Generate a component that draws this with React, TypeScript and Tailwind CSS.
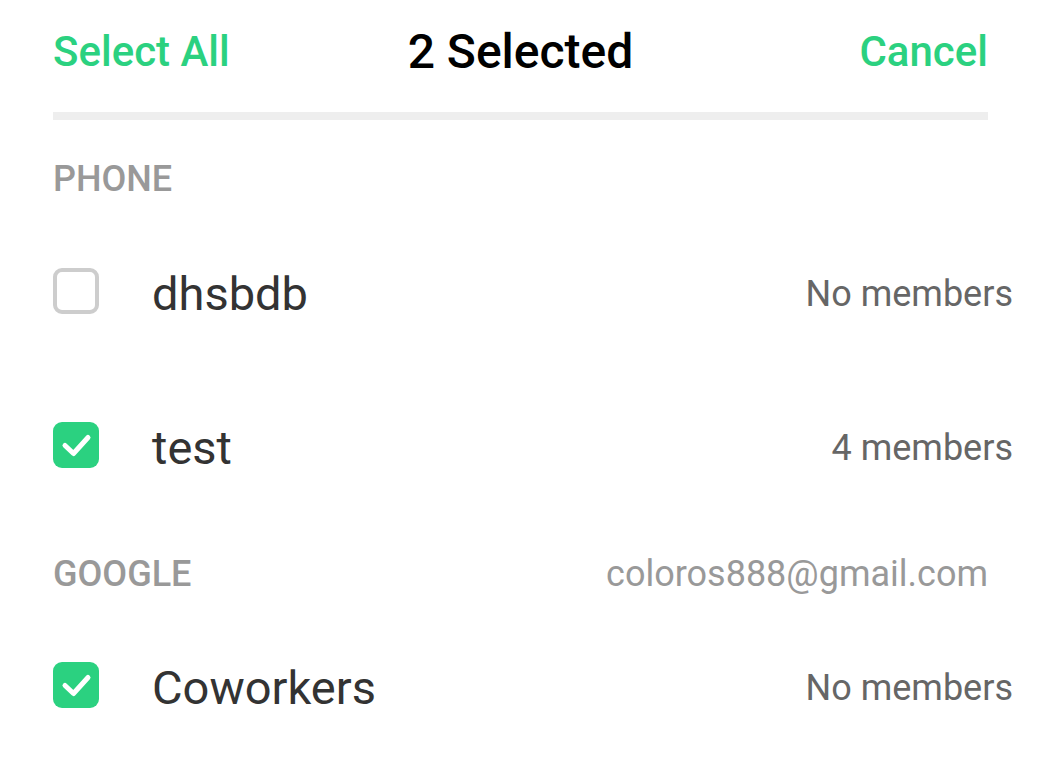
interface Group {
  name: string;
  members: string;
  checked: boolean;
}

const phoneGroups: Group[] = [
  { name: 'dhsbdb', members: 'No members', checked: false },
  { name: 'test', members: '4 members', checked: true },
];

const googleGroups: Group[] = [{ name: 'Coworkers', members: 'No members', checked: true }];

function Checkbox({ checked }: { checked: boolean }) {
  if (!checked) {
    return <div className="w-[46px] h-[46px] rounded-[9px] border-[4px] border-[#cdcdcd] bg-white flex-shrink-0" />;
  }
  return (
    <div className="w-[46px] h-[46px] rounded-[9px] bg-[#2bd180] flex items-center justify-center flex-shrink-0">
      <svg viewBox="0 0 46 46" className="w-[46px] h-[46px]" fill="none">
        <path d="M12 23.5 L20.5 31.5 L35 15.5" stroke="white" strokeWidth="5" strokeLinecap="round" strokeLinejoin="round" />
      </svg>
    </div>
  );
}

function GroupRow({ group }: { group: Group }) {
  return (
    <div className="h-[154px] flex items-center pl-[53px] pr-[35px]">
      <Checkbox checked={group.checked} />
      <span className="ml-[53px] mt-[4px] text-[47px] leading-none text-[#333333]">{group.name}</span>
      <span className="ml-auto mt-[6px] text-[36px] leading-none text-[#666666]">{group.members}</span>
    </div>
  );
}

export default function App() {
  return (
    <div className="w-[1048px] h-[784px] bg-white overflow-hidden" style={{ fontFamily: 'Roboto, "Noto Sans", sans-serif' }}>
      {/* Barra de seleção */}
      <div className="h-[104px] pl-[53px] pr-[60px] grid grid-cols-[1fr_auto_1fr] items-center">
        <button className="justify-self-start text-[42px] font-medium text-[#2bd180] leading-none">Select All</button>
        <div className="text-center text-[48px] font-medium text-black leading-none">2 Selected</div>
        <button className="justify-self-end text-[42px] font-medium text-[#2bd180] leading-none">Cancel</button>
      </div>
      <div className="mt-2 ml-[53px] mr-[60px] h-2 bg-[#eeeeee]" />

      <div className="h-[94px] pl-[53px] pt-[41px] text-[36px] leading-[36px] font-medium text-[#999999]">PHONE</div>
      {phoneGroups.map((g) => (
        <GroupRow key={g.name} group={g} />
      ))}

      <div className="h-[86px] pl-[53px] pr-[60px] pt-[34px] flex justify-between text-[36px] leading-[36px] text-[#999999]">
        <span className="font-medium">GOOGLE</span>
        <span>coloros888@gmail.com</span>
      </div>
      {googleGroups.map((g) => (
        <GroupRow key={g.name} group={g} />
      ))}
    </div>
  );
}
